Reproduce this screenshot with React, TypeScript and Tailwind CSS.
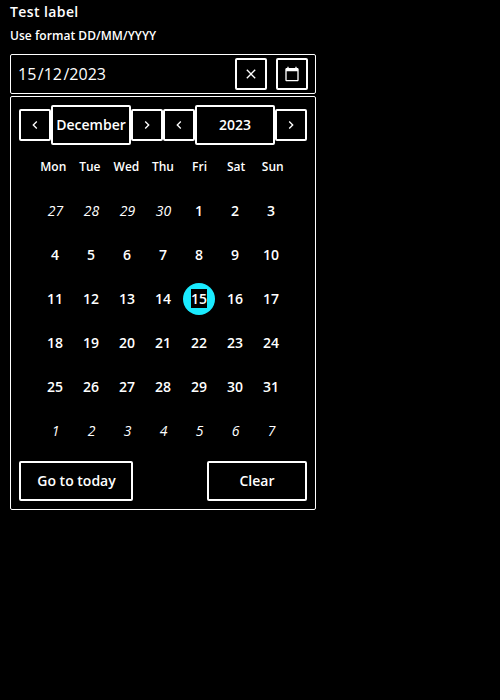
const PATHS = {
  left: "M15.41 7.41L14 6l-6 6 6 6 1.41-1.41L10.83 12z",
  right: "M10 6L8.59 7.41 13.17 12l-4.58 4.59L10 18l6-6z",
  close: "M19 6.41L17.59 5 12 10.59 6.41 5 5 6.41 10.59 12 5 17.59 6.41 19 12 13.41 17.59 19 19 17.59 13.41 12z",
};

function Icon({ name }: { name: keyof typeof PATHS }) {
  return (
    <svg viewBox="0 0 24 24" className="size-4 fill-white">
      <path d={PATHS[name]} />
    </svg>
  );
}

function IconButton({ name, label }: { name: keyof typeof PATHS; label: string }) {
  return (
    <button aria-label={label} className="flex size-8 shrink-0 items-center justify-center rounded-[2px] border-2 border-white">
      <Icon name={name} />
    </button>
  );
}

function Picker({ text }: { text: string }) {
  return (
    <button className="flex h-10 w-20 shrink-0 items-center justify-center rounded-[2px] border-2 border-white">{text}</button>
  );
}

const WEEKDAYS = ["Mon", "Tue", "Wed", "Thu", "Fri", "Sat", "Sun"];
const DAYS = Array.from({ length: 42 }, (_, i) => {
  if (i < 4) return { day: 27 + i, outside: true };
  if (i < 35) return { day: i - 3, outside: false };
  return { day: i - 34, outside: true };
});

export default function App() {
  return (
    <div className="h-[700px] bg-black px-2.5 font-['Open_Sans','Noto_Sans',sans-serif] text-sm font-semibold text-white">
      <div className="h-6 leading-6 tracking-[0.4px]">Test label</div>
      <div className="h-[30px] pt-0.5 text-xs leading-5 tracking-[0.04px]">Use format DD/MM/YYYY</div>
      <div className="flex h-10 w-[306px] items-center rounded-[2px] border border-white pr-[7px] pl-[7px]">
        <span className="flex-1 text-base font-normal">
          <span className="mr-[1.5px]">15</span>/<span className="mr-[1.5px]">12</span>/2023
        </span>
        <div className="flex gap-[9px]">
          <IconButton name="close" label="Clear date" />
          <button aria-label="Open calendar" className="flex size-8 items-center justify-center rounded-[2px] border-2 border-white">
            <svg viewBox="0 0 24 24" className="size-4 fill-white">
              <path d="M20 3h-1V1h-2v2H7V1H5v2H4c-1.100 0-2 .9-2 2v16c0 1.100.9 2 2 2h16c1.100 0 2-.9 2-2V5c0-1.100-.9-2-2-2zm0 18H4V8h16v13z" />
            </svg>
          </button>
        </div>
      </div>
      <div className="mt-0.5 h-[414px] w-[306px] rounded-[2px] border border-white px-2 pt-2">
        <div className="flex items-center">
          <IconButton name="left" label="Previous month" />
          <Picker text="December" />
          <IconButton name="right" label="Next month" />
          <IconButton name="left" label="Previous year" />
          <Picker text="2023" />
          <IconButton name="right" label="Next year" />
        </div>
        <div className="mt-3 ml-4 grid w-[256px] grid-cols-7 text-center text-xs leading-5">
          {WEEKDAYS.map((d) => <span key={d}>{d}</span>)}
        </div>
        <div className="mt-3 ml-[18px] grid w-[252px] grid-cols-7">
          {DAYS.map(({ day, outside }, i) => (
            <div key={i} className="flex h-11 items-center justify-center">
              <span className={`flex size-8 items-center justify-center rounded-full pb-px ${outside ? "pl-px font-normal italic" : ""} ${day === 15 ? "bg-[#1aebff]" : ""}`}>
                <span className="bg-black leading-[19px]">{day}</span>
              </span>
            </div>
          ))}
        </div>
        <div className="mt-2 flex justify-between">
          <button className="h-10 w-[114px] rounded-[2px] border-2 border-white pl-px">Go to today</button>
          <button className="h-10 w-[100px] rounded-[2px] border-2 border-white">Clear</button>
        </div>
      </div>
    </div>
  );
}
